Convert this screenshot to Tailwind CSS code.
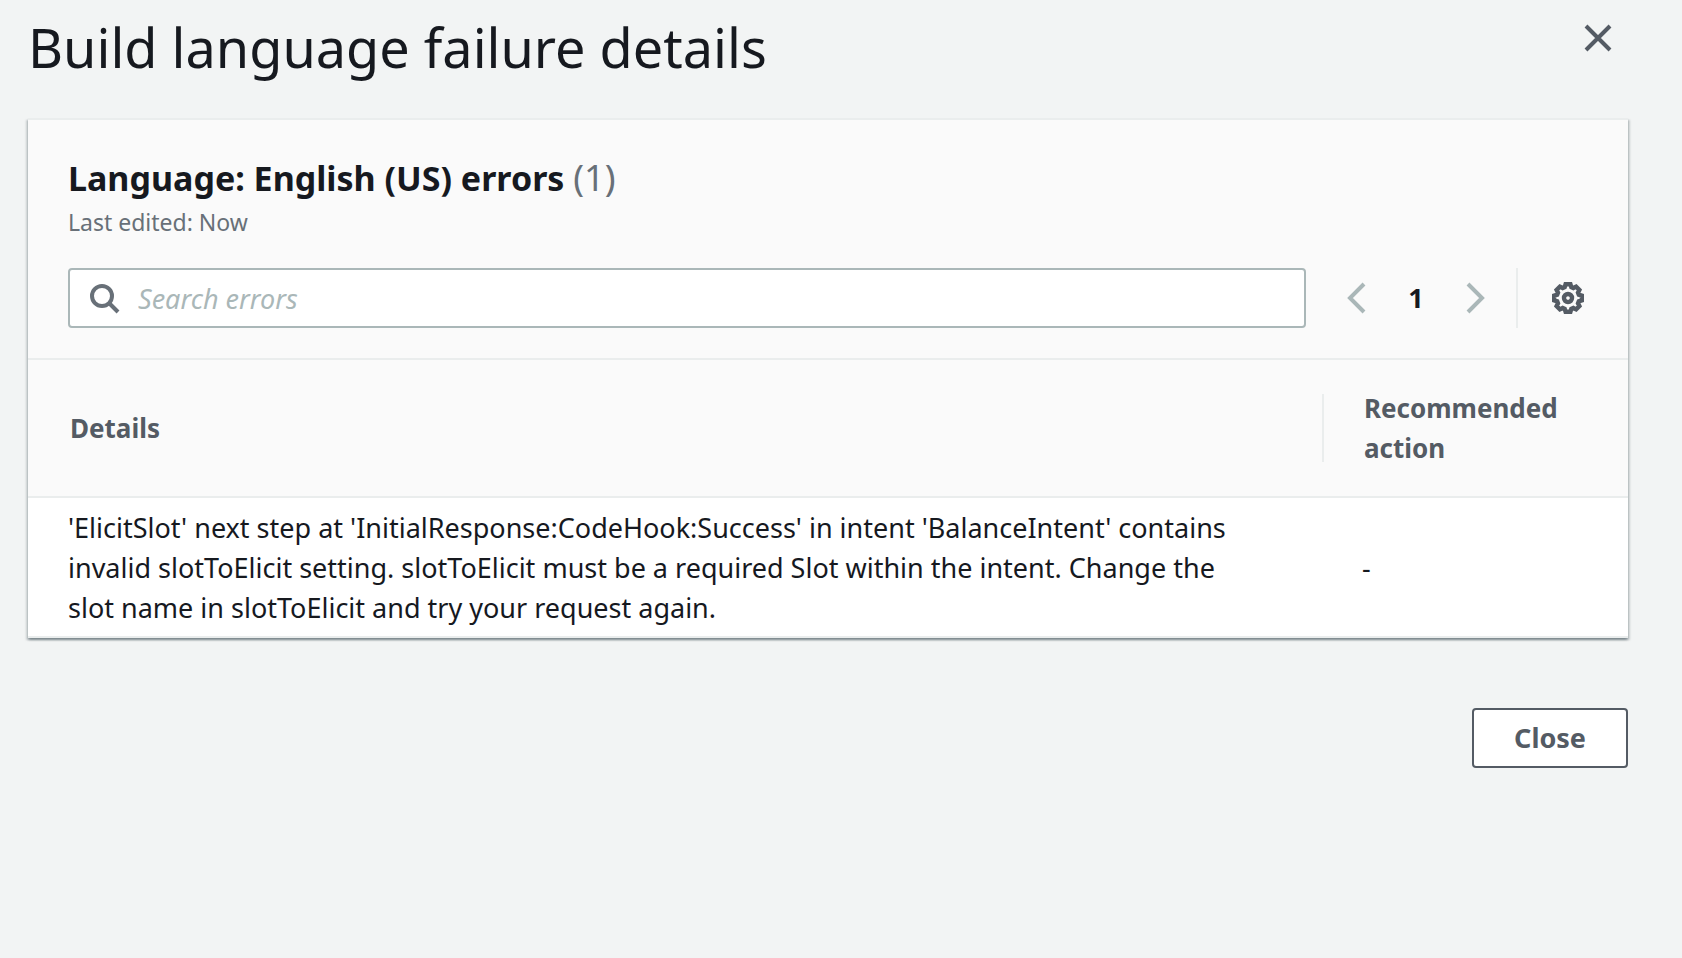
<!DOCTYPE html>
<html lang="en">
<head>
<meta charset="utf-8">
<meta name="viewport" content="width=device-width, initial-scale=1">
<title>Build language failure details</title>
<script src="https://cdn.jsdelivr.net/npm/@tailwindcss/browser@4"></script>
</head>
<body class="min-h-screen bg-[#f2f4f4] font-['Noto_Sans','Open_Sans',sans-serif] text-[#16191f]">
<main role="dialog" aria-labelledby="title" class="pt-3 pr-[54px] pb-12 pl-7">
  <header class="flex items-start justify-between pr-2.5">
    <h1 id="title" class="text-[54px] leading-[70px]">Build language failure details</h1>
    <button type="button" aria-label="Close dialog" class="mt-1.5 flex size-10 items-center justify-center text-[#545b64]">
      <svg class="size-8" viewBox="0 0 32 32" fill="none" stroke="currentColor" stroke-width="4"><path d="M4 4l24 24M28 4L4 28"/></svg>
    </button>
  </header>

  <section class="mt-9 border-t-2 border-[#eaeded] bg-white shadow-[0_2px_2px_0_rgba(0,28,36,0.3),2px_2px_2px_0_rgba(0,28,36,0.15),-2px_2px_2px_0_rgba(0,28,36,0.15)]">
    <div class="border-b-2 border-[#eaeded] bg-[#fafafa] pt-9 pr-11 pb-[30px] pl-10">
      <h2 class="text-[34px] leading-[44px] font-bold">Language: English (US) errors <span class="text-[36px] font-normal text-[#687078]">(1)</span></h2>
      <p class="mt-1.5 text-[23px] leading-8 text-[#687078]">Last edited: Now</p>
      <div class="mt-[30px] flex h-[60px] items-center">
        <label class="flex h-full min-w-0 flex-1 items-center rounded-sm border-2 border-[#aab7b8] bg-white pl-5">
          <svg class="size-8 shrink-0 text-[#687078]" viewBox="0 0 32 32" fill="none" stroke="currentColor" stroke-width="4"><circle cx="12" cy="14" r="10"/><path d="M19 21l9 9"/></svg>
          <input type="search" aria-label="Search errors" placeholder="Search errors" class="ml-4 h-full min-w-0 flex-1 text-[27px] italic outline-none placeholder:text-[#aab7b8]">
        </label>
        <nav aria-label="Pagination" class="ml-9 flex items-center">
          <button type="button" aria-label="Previous page" class="flex size-8 items-center justify-center text-[#aab7b8]">
            <svg class="size-8" viewBox="0 0 32 32" fill="none" stroke="currentColor" stroke-width="4"><path d="M22 2L8 16l14 14"/></svg>
          </button>
          <button type="button" aria-current="page" class="mr-4 ml-3.5 w-14 text-center text-[27px] leading-10 font-bold">1</button>
          <button type="button" aria-label="Next page" class="flex size-8 items-center justify-center text-[#aab7b8]">
            <svg class="size-8" viewBox="0 0 32 32" fill="none" stroke="currentColor" stroke-width="4"><path d="M8 2l14 14L8 30"/></svg>
          </button>
        </nav>
        <div class="ml-6 flex h-full items-center border-l-2 border-[#eaeded] pl-[34px]">
          <button type="button" aria-label="Preferences" class="text-[#545b64]">
            <svg class="size-8" viewBox="-16 -16 32 32" fill="none" stroke="currentColor" stroke-width="4.4"><path d="M-2.4-13.8H2.4L3.3-10.8 5.3-10 8.1-11.4 11.4-8.1 10-5.3 10.8-3.3 13.8-2.4V2.4L10.8 3.3 10 5.3 11.4 8.1 8.1 11.4 5.3 10 3.3 10.8 2.4 13.8H-2.4L-3.3 10.8-5.3 10-8.1 11.4-11.4 8.1-10 5.3-10.8 3.3-13.8 2.4V-2.4L-10.8-3.3-10-5.3-11.4-8.1-8.1-11.4-5.3-10-3.3-10.8Z"/><circle r="4"/></svg>
          </button>
        </div>
      </div>
    </div>
    <table class="w-full table-fixed border-collapse text-left">
      <thead class="bg-[#fafafa] text-[26px] leading-10 text-[#545b64]">
        <tr class="border-b-2 border-[#eaeded]">
          <th scope="col" class="py-7 pr-10 pl-[42px] font-bold">Details</th>
          <th scope="col" class="relative w-[306px] py-7 pr-10 pl-[42px] font-bold"><span class="absolute inset-y-[34px] left-0 w-0.5 bg-[#eaeded]"></span>Recommended action</th>
        </tr>
      </thead>
      <tbody class="text-[27px] leading-10">
        <tr class="border-b-2 border-[#eaeded]">
          <td class="pt-2.5 pr-16 pb-2 pl-10">'ElicitSlot' next step at 'InitialResponse:CodeHook:Success' in intent 'BalanceIntent' contains invalid slotToElicit setting. slotToElicit must be a required Slot within the intent. Change the slot name in slotToElicit and try your request again.</td>
          <td class="pt-2.5 pr-10 pb-2 pl-10">-</td>
        </tr>
      </tbody>
    </table>
  </section>

  <footer class="mt-[70px] flex justify-end">
    <button type="button" class="h-[60px] rounded-sm border-2 border-[#545b64] bg-white px-10 text-[27px] leading-10 font-bold text-[#545b64]">Close</button>
  </footer>
</main>
</body>
</html>
